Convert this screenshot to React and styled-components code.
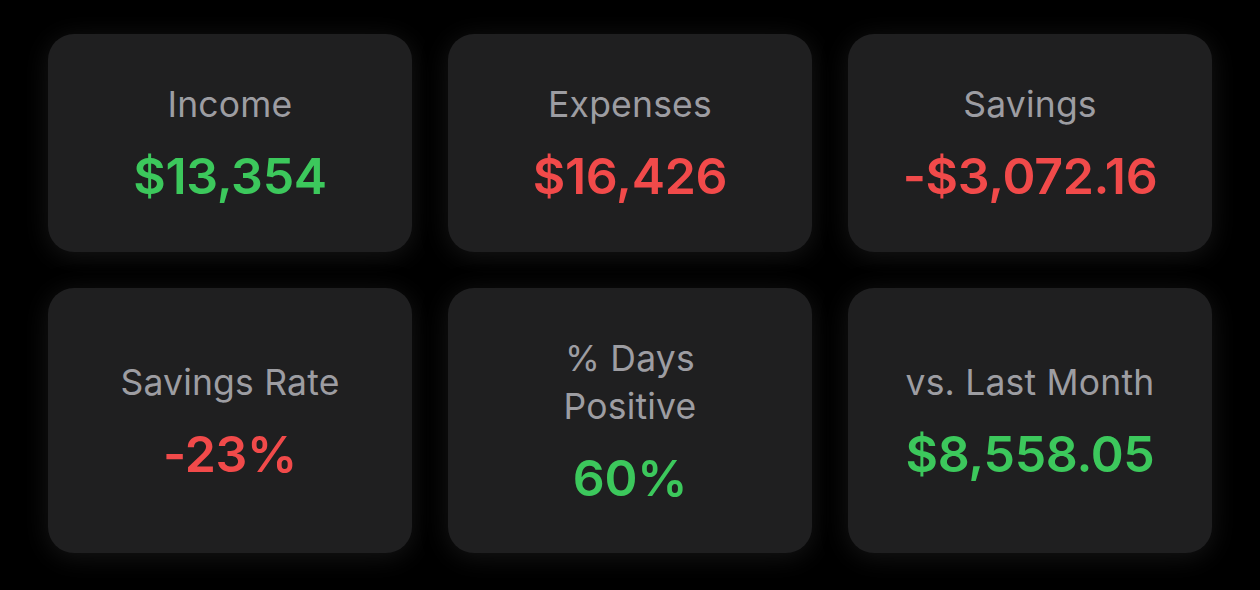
import React from "react";
import styled, { createGlobalStyle } from "styled-components";

const Global = createGlobalStyle`
  html, body { margin: 0; padding: 0; background: #000; }
  body { font-family: Inter, "Noto Sans", "Liberation Sans", sans-serif; -webkit-font-smoothing: antialiased; }
`;

const Page = styled.div`
  width: 1260px;
  height: 590px;
  box-sizing: border-box;
  padding: 34px 48px 37px;
  background: #000;
  display: grid;
  grid-template-columns: repeat(3, 364px);
  grid-template-rows: 218px 265px;
  column-gap: 36px;
  row-gap: 36px;
`;

const Card = styled.div`
  background: #1f1f20;
  border-radius: 26px;
  box-shadow: 0 4px 26px rgba(48, 48, 48, 0.45);
  display: flex;
  flex-direction: column;
  align-items: center;
  justify-content: center;
  text-align: center;
`;

const Label = styled.div`
  color: #9d9da2;
  font-size: 35.5px;
  font-weight: 400;
  line-height: 48px;
  letter-spacing: 0.2px;
`;

const Value = styled.div`
  color: ${(p) => (p.$tone === "pos" ? "#3cc85c" : "#f14a4a")};
  font-size: 50px;
  font-weight: 600;
  line-height: 58px;
  margin-top: 18px;
  letter-spacing: -0.3px;
`;

const stats = [
  { label: ["Income"], value: "$13,354", tone: "pos" },
  { label: ["Expenses"], value: "$16,426", tone: "neg" },
  { label: ["Savings"], value: "-$3,072.16", tone: "neg" },
  { label: ["Savings Rate"], value: "-23%", tone: "neg" },
  { label: ["% Days", "Positive"], value: "60%", tone: "pos" },
  { label: ["vs. Last Month"], value: "$8,558.05", tone: "pos" },
];

export default function App() {
  return (
    <>
      <Global />
      <Page>
        {stats.map((s) => (
          <Card key={s.value}>
            <Label>
              {s.label.map((l, i) => (
                <div key={i}>{l}</div>
              ))}
            </Label>
            <Value $tone={s.tone}>{s.value}</Value>
          </Card>
        ))}
      </Page>
    </>
  );
}
